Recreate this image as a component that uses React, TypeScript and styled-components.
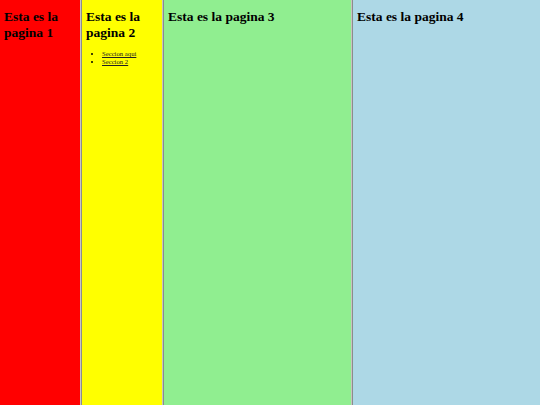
import { Fragment } from "react";
import styled, { createGlobalStyle } from "styled-components";

const GlobalStyle = createGlobalStyle`
    html, body, #root {
        height: 100%;
        margin: 0;
    }
    body {
        font-family: "Liberation Serif", "Times New Roman", serif;
        overflow: hidden;
    }
`

const Frameset = styled.div`
    display: grid;
    grid-template-columns: 80px 2px 80px 2px 187px 2px 1fr;
    height: 100%;
`

const Frame = styled.div<{ $bg: string }>`
    background-color: ${(p) => p.$bg};
    padding: 0 4px;
    overflow: hidden;
`

const Divider = styled.div`
    border-left: 1px solid #c8c4c0;
    border-right: 1px solid #8c8c8c;
`

const Title = styled.h2`
    font-size: 13.5px;
    font-weight: bold;
    line-height: 15.5px;
    margin: 9px 0 0;
    color: #000;
`

const List = styled.ul`
    margin: 10px 0 0;
    padding-left: 16px;
    font-size: 6.7px;
    line-height: 7.7px;
    list-style: disc;
`

const Item = styled.li`
    a {
        color: #222;
        text-decoration: underline;
    }
`

const pages = [
    { bg: "#ff0000", title: "Esta es la pagina 1" },
    { bg: "#ffff00", title: "Esta es la pagina 2", links: ["Seccion aqui", "Seccion 2"] },
    { bg: "#90ee90", title: "Esta es la pagina 3" },
    { bg: "#add8e6", title: "Esta es la pagina 4" },
];

const App = () => {
    return (
        <>
            <GlobalStyle />
            <Frameset>
                {pages.map((page, i) => (
                    <Fragment key={page.title}>
                        {i > 0 && <Divider />}
                        <Frame $bg={page.bg}>
                            <Title>{page.title}</Title>
                            {page.links && (
                                <List>
                                    {page.links.map((l) => (
                                        <Item key={l}><a href="#">{l}</a></Item>
                                    ))}
                                </List>
                            )}
                        </Frame>
                    </Fragment>
                ))}
            </Frameset>
        </>
    )
}

export default App;
